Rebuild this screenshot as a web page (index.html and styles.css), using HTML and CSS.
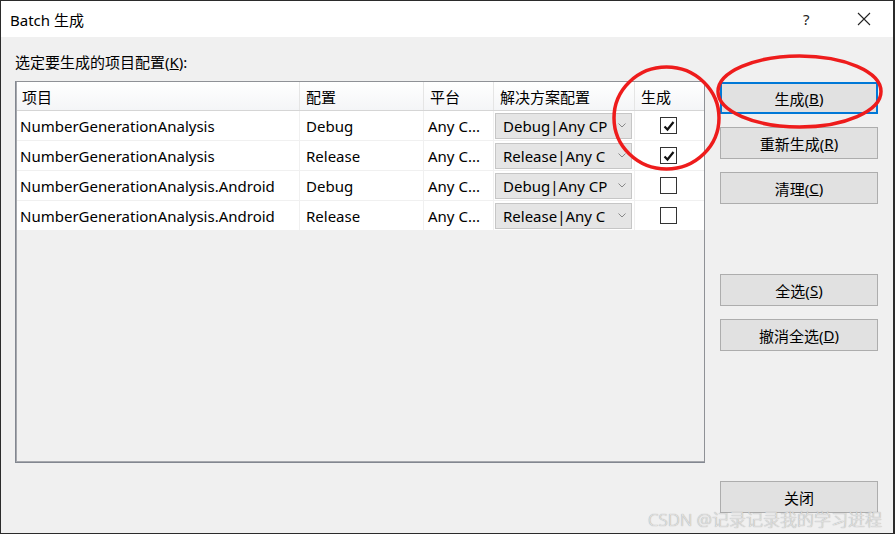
FILE: index.html
```html
<!DOCTYPE html>
<html>
<head>
<meta charset="utf-8">
<link rel="stylesheet" href="styles.css">
</head>
<body>
<div class="window">
  <div class="titlebar">
    <span class="title">Batch 生成</span>
    <span class="help">?</span>
    <span class="close">
      <svg width="14" height="14" viewBox="0 0 14 14"><path d="M1 1 L13 13 M13 1 L1 13" stroke="#222" stroke-width="1.1" fill="none"/></svg>
    </span>
  </div>
  <div class="content">
    <div class="leftcol">
      <div class="label">选定要生成的项目配置(<u>K</u>):</div>
      <div class="grid">
        <div class="row head">
          <div class="c c1">项目</div>
          <div class="c c2">配置</div>
          <div class="c c3">平台</div>
          <div class="c c4">解决方案配置</div>
          <div class="c c5">生成</div>
        </div>
        <div class="row">
          <div class="c c1">NumberGenerationAnalysis</div>
          <div class="c c2">Debug</div>
          <div class="c c3">Any C...</div>
          <div class="c c4"><div class="combo"><span class="ctext">Debug|Any CP</span><svg class="chev" width="8" height="5" viewBox="0 0 8 5"><path d="M0.5 0.5 L4 4 L7.5 0.5" stroke="#888" fill="none"/></svg></div></div>
          <div class="c c5"><div class="cb"><svg width="14" height="14" viewBox="0 0 14 14"><path d="M2.5 7.5 L5.5 10.5 L11.5 3" stroke="#111" stroke-width="2.2" fill="none"/></svg></div></div>
        </div>
        <div class="row">
          <div class="c c1">NumberGenerationAnalysis</div>
          <div class="c c2">Release</div>
          <div class="c c3">Any C...</div>
          <div class="c c4"><div class="combo"><span class="ctext">Release|Any C</span><svg class="chev" width="8" height="5" viewBox="0 0 8 5"><path d="M0.5 0.5 L4 4 L7.5 0.5" stroke="#888" fill="none"/></svg></div></div>
          <div class="c c5"><div class="cb"><svg width="14" height="14" viewBox="0 0 14 14"><path d="M2.5 7.5 L5.5 10.5 L11.5 3" stroke="#111" stroke-width="2.2" fill="none"/></svg></div></div>
        </div>
        <div class="row">
          <div class="c c1">NumberGenerationAnalysis.Android</div>
          <div class="c c2">Debug</div>
          <div class="c c3">Any C...</div>
          <div class="c c4"><div class="combo"><span class="ctext">Debug|Any CP</span><svg class="chev" width="8" height="5" viewBox="0 0 8 5"><path d="M0.5 0.5 L4 4 L7.5 0.5" stroke="#888" fill="none"/></svg></div></div>
          <div class="c c5"><div class="cb"></div></div>
        </div>
        <div class="row">
          <div class="c c1">NumberGenerationAnalysis.Android</div>
          <div class="c c2">Release</div>
          <div class="c c3">Any C...</div>
          <div class="c c4"><div class="combo"><span class="ctext">Release|Any C</span><svg class="chev" width="8" height="5" viewBox="0 0 8 5"><path d="M0.5 0.5 L4 4 L7.5 0.5" stroke="#888" fill="none"/></svg></div></div>
          <div class="c c5"><div class="cb"></div></div>
        </div>
      </div>
    </div>
    <div class="rightcol">
      <div class="btngroup">
        <div class="btn default">生成(<u>B</u>)</div>
        <div class="btn">重新生成(<u>R</u>)</div>
        <div class="btn">清理(<u>C</u>)</div>
      </div>
      <div class="btngroup second">
        <div class="btn">全选(<u>S</u>)</div>
        <div class="btn">撤消全选(<u>D</u>)</div>
      </div>
      <div class="btn closebtn">关闭</div>
    </div>
  </div>
  <svg class="marks" width="895" height="534" viewBox="0 0 895 534">
    <ellipse cx="666.5" cy="118" rx="52.5" ry="51" stroke="#ee1c1c" stroke-width="3.5" fill="none"/>
    <ellipse cx="799.5" cy="91.5" rx="81.5" ry="35.5" stroke="#ee1c1c" stroke-width="3.5" fill="none"/>
  </svg>
  <div class="watermark">CSDN @记录记录我的学习进程</div>
</div>
</body>
</html>
```

FILE: styles.css
```css
* { box-sizing: border-box; }
html, body { margin: 0; padding: 0; }
body {
  width: 895px;
  height: 534px;
  overflow: hidden;
  font-family: "Noto Sans", "Noto Sans CJK SC", sans-serif;
  color: #000;
}
.window {
  position: relative;
  width: 895px;
  height: 534px;
  border: 1px solid #2b2b2b;
  border-right-width: 2px;
  display: flex;
  flex-direction: column;
  background: #f0f0f0;
}
.titlebar {
  height: 36px;
  background: #fff;
  display: flex;
  align-items: center;
  padding-left: 9px;
  flex-shrink: 0;
}
.title {
  font-size: 15px;
  flex: 1;
}
.help {
  font-size: 15px;
  width: 54px;
  color: #222;
}
.close {
  width: 36px;
  display: flex;
  align-items: center;
}
.content {
  flex: 1;
  display: flex;
  padding: 0 13px 20px 14px;
}
.leftcol {
  width: 690px;
  display: flex;
  flex-direction: column;
}
.label {
  font-size: 15px;
  height: 44px;
  padding-top: 15px;
  line-height: 20px;
}
.grid {
  width: 690px;
  height: 382px;
  border: 1px solid #8f9196;
  border-left-color: #828790;
  border-bottom-color: #828790;
  box-shadow: inset 1px -1px 0 #a6a8ad;
  background: #f0f0f0;
  display: flex;
  flex-direction: column;
}
.row {
  display: flex;
  height: 30px;
  background: #fff;
  border-bottom: 1px solid #f0f0f0;
  font-size: 15px;
  margin-left: 1px;
}
.row.head {
  height: 29px;
  background: linear-gradient(#ffffff, #f4f5f7);
  border-bottom: 1px solid #d5d5d5;
  font-size: 15px;
  margin-left: 1px;
}
.c {
  display: flex;
  align-items: center;
  border-right: 1px solid #f0f0f0;
  white-space: nowrap;
  overflow: hidden;
}
.head .c { border-right-color: #e5e5e5; }
.c1 { width: 283px; padding-left: 3px; }
.c2 { width: 124px; padding-left: 6px; }
.c3 { width: 70px; padding-left: 4px; }
.c4 { width: 141px; padding-left: 1px; }
.c5 { width: 69px; padding-left: 25px; border-right: none; }
.head .c1 { padding-left: 5px; }
.head .c2 { padding-left: 6px; }
.head .c3 { padding-left: 6px; }
.head .c4 { padding-left: 6px; }
.head .c5 { padding-left: 6px; }
.combo {
  width: 137px;
  height: 26px;
  background: #e5e5e5;
  border: 1px solid #c6c6c6;
  display: flex;
  align-items: center;
  padding-left: 7px;
}
.ctext {
  width: 112px;
  white-space: nowrap;
}
.chev { margin-left: 3px; }
.cb {
  width: 17px;
  height: 17px;
  border: 1px solid #333;
  background: #fff;
  display: flex;
  align-items: center;
  justify-content: center;
}
.rightcol {
  width: 158px;
  margin-left: 15px;
  display: flex;
  flex-direction: column;
  padding-top: 45px;
}
.btngroup {
  display: flex;
  flex-direction: column;
  gap: 13px;
}
.btngroup.second { margin-top: 70px; }
.btn {
  height: 32px;
  background: #e1e1e1;
  border: 1px solid #adadad;
  display: flex;
  align-items: center;
  justify-content: center;
  font-size: 15px;
}
.btn.default {
  border-color: #0078d7;
  box-shadow: inset 0 0 0 1px #0078d7;
}
.closebtn { margin-top: auto; }
.marks {
  position: absolute;
  left: -1px;
  top: -1px;
  pointer-events: none;
}
.watermark {
  position: absolute;
  left: 647px;
  top: 505px;
  font-size: 17px;
  font-weight: 300;
  color: #e4e4e4;
  text-shadow: 0 0 1px #8a8a8a;
  white-space: nowrap;
}
```
